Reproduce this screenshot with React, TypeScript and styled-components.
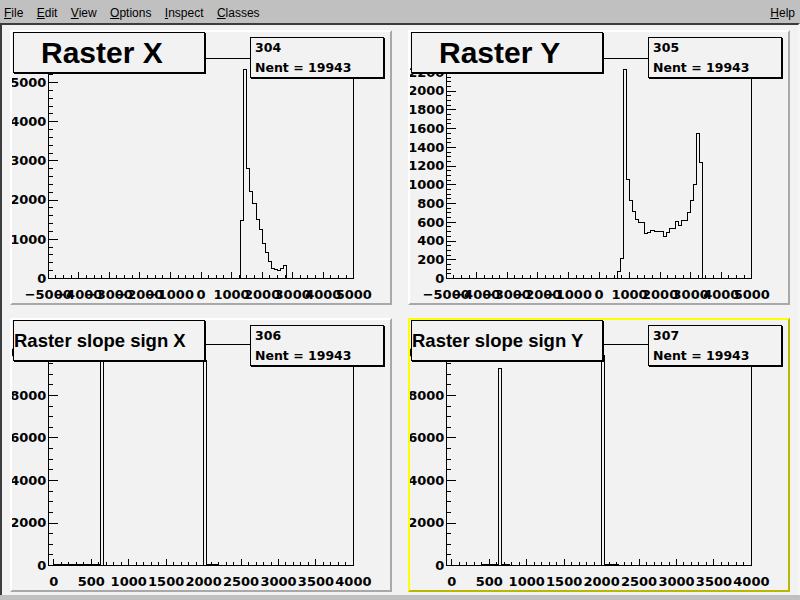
import React from "react";
import styled, { createGlobalStyle } from "styled-components";

const GlobalStyle = createGlobalStyle`
  html, body { margin: 0; padding: 0; }
  body { background: #c0c0c0; font-family: "Liberation Sans", Arial, sans-serif; }
  #root { width: 800px; height: 600px; overflow: hidden; }
`;

const Window = styled.div`
  width: 800px;
  height: 600px;
  display: flex;
  flex-direction: column;
  background: #c0c0c0;
`;

const MenuBar = styled.nav`
  box-sizing: border-box;
  height: 23px;
  padding: 3px 5px 0 4px;
  display: flex;
  align-items: center;
  gap: 13.4px;
  font: 12px "Liberation Sans", Arial, sans-serif;
  color: #000;
`;

const MenuItem = styled.span`
  white-space: nowrap;
`;

const Mnemonic = styled.span`
  text-decoration: underline;
  text-underline-offset: 1px;
`;

const MenuSpacer = styled.div`
  flex: 1;
`;

const Canvas = styled.main`
  display: grid;
  grid-template-columns: 382px 382px;
  grid-template-rows: 275px 274px;
  column-gap: 16px;
  row-gap: 13px;
  padding: 5px 8px 3px 8px;
  border-top: 2px solid #3c3c3c;
  border-left: 2px solid #3c3c3c;
  border-right: 2px solid #f6f6f6;
  background: #f2f2f2;
`;

const Pad = styled.section<{ $selected?: boolean }>`
  position: relative;
  box-sizing: border-box;
  overflow: hidden;
  background: #f2f2f2;
  border: 2px solid;
  border-color: ${(p) =>
    p.$selected
      ? "#ffff00 #b8b800 #b8b800 #ffff00"
      : "#ffffff #a8a8a8 #a8a8a8 #ffffff"};
`;

const PlotSvg = styled.svg`
  display: block;
  margin: -2px 0 0 -2px;
  font-family: "DejaVu Sans", "Liberation Sans", sans-serif;
  font-weight: bold;
  font-size: 13px;
`;

const TitleBox = styled.div<{ $size: number; $indent: number }>`
  position: absolute;
  left: 1px;
  top: 0;
  box-sizing: border-box;
  width: 192px;
  height: 41px;
  border: 1px solid #000;
  box-shadow: 1px 1px 0 #000;
  background: #f2f2f2;
  display: flex;
  align-items: center;
  padding-left: ${(p) => p.$indent}px;
  font-family: "Liberation Sans", Arial, sans-serif;
  font-weight: bold;
  font-size: ${(p) => p.$size}px;
  white-space: nowrap;
  color: #000;
`;

const StatsBox = styled.div`
  position: absolute;
  left: 238px;
  top: 5px;
  box-sizing: border-box;
  width: 134px;
  height: 41px;
  border: 1px solid #000;
  box-shadow: 1px 1px 0 #000;
  background: #f2f2f2;
  padding-left: 4px;
  font-family: "DejaVu Sans", "Liberation Sans", sans-serif;
  font-weight: bold;
  font-size: 12.5px;
  color: #000;
`;

const StatLine = styled.div`
  height: 20px;
  line-height: 20px;
  white-space: nowrap;
`;

type Bin = { lo: number; hi: number; v: number };

interface PadSpec {
  title: string;
  titleSize: number;
  titleIndent: number;
  id: string;
  selected?: boolean;
  frameTop: number;
  frameBottom: number;
  x0: number;
  xScale: number;
  xMin: number;
  xMax: number;
  xMajor: number;
  xMinorDiv: number;
  yScale: number;
  yMajor: number;
  yMinorDiv: number;
  bins: Bin[];
}

const FRAME_L = 38;
const FRAME_R = 343;

const seq = (start: number, step: number, vals: number[]): Bin[] =>
  vals.map((v, i) => ({ lo: start + i * step, hi: start + (i + 1) * step, v }));

const pads: PadSpec[] = [
  {
    title: "Raster X",
    titleSize: 30,
    titleIndent: 27,
    id: "304",
    frameTop: 28,
    frameBottom: 248,
    x0: 191,
    xScale: 0.03056,
    xMin: -5000,
    xMax: 5000,
    xMajor: 1000,
    xMinorDiv: 4,
    yScale: 0.0392,
    yMajor: 1000,
    yMinorDiv: 5,
    bins: seq(1300, 100, [
      1480, 5332, 2798, 2219, 1906, 1505, 1242, 885, 656, 426, 255, 222, 196, 263, 332,
    ]),
  },
  {
    title: "Raster Y",
    titleSize: 30,
    titleIndent: 27,
    id: "305",
    frameTop: 28,
    frameBottom: 248,
    x0: 191,
    xScale: 0.03056,
    xMin: -5000,
    xMax: 5000,
    xMajor: 1000,
    xMinorDiv: 4,
    yScale: 0.09365,
    yMajor: 200,
    yMinorDiv: 4,
    bins: seq(600, 100, [
      78, 217, 2228, 1057, 833, 715, 627, 594, 594, 477, 494, 512, 502, 502, 502, 448, 488,
      531, 531, 609, 566, 619, 619, 701, 833, 1004, 1545, 1242,
    ]),
  },
  {
    title: "Raster slope sign X",
    titleSize: 18.5,
    titleIndent: 0,
    id: "306",
    frameTop: 26,
    frameBottom: 247,
    x0: 43.8,
    xScale: 0.0749,
    xMin: -75,
    xMax: 4005,
    xMajor: 500,
    xMinorDiv: 5,
    yScale: 0.02125,
    yMajor: 2000,
    yMinorDiv: 4,
    bins: [
      { lo: 0, hi: 623, v: 47 },
      { lo: 623, hi: 663, v: 9860 },
      { lo: 2005, hi: 2045, v: 9670 },
      { lo: 2045, hi: 2190, v: 47 },
    ],
  },
  {
    title: "Raster slope sign Y",
    titleSize: 18.5,
    titleIndent: 0,
    id: "307",
    selected: true,
    frameTop: 26,
    frameBottom: 247,
    x0: 43.8,
    xScale: 0.0749,
    xMin: -75,
    xMax: 4005,
    xMajor: 500,
    xMinorDiv: 5,
    yScale: 0.02125,
    yMajor: 2000,
    yMinorDiv: 4,
    bins: [
      { lo: 400, hi: 621, v: 47 },
      { lo: 621, hi: 661, v: 9280 },
      { lo: 661, hi: 777, v: 47 },
      { lo: 2005, hi: 2045, v: 9860 },
      { lo: 2045, hi: 2219, v: 47 },
    ],
  },
];

const fmt = (v: number) => (v < 0 ? "\u2212" + String(-v) : String(v));

function HistPad({ spec }: { spec: PadSpec }) {
  const X = (v: number) => spec.x0 + v * spec.xScale;
  const Y = (v: number) => spec.frameBottom - v * spec.yScale;
  const px = (n: number) => Math.floor(n) + 0.5;
  const fb = spec.frameBottom + 0.5;
  const fl = FRAME_L + 0.5;

  const ticks: React.ReactNode[] = [];
  const labels: React.ReactNode[] = [];

  // Y axis
  const yStep = spec.yMajor / spec.yMinorDiv;
  for (let i = 0; ; i++) {
    const v = i * yStep;
    const y = Y(v);
    if (y < spec.frameTop) break;
    const major = i % spec.yMinorDiv === 0;
    const yy = Math.round(y) + 0.5;
    ticks.push(
      <line key={"yt" + i} x1={fl} y1={yy} x2={fl + (major ? 9 : 4.5)} y2={yy} />
    );
    if (major) {
      labels.push(
        <text key={"yl" + i} x={36.4} y={y + 4.75} textAnchor="end">
          {fmt(v)}
        </text>
      );
    }
  }

  // X axis
  const xStep = spec.xMajor / spec.xMinorDiv;
  const first = Math.ceil(spec.xMin / xStep - 1e-9);
  for (let k = first; k * xStep <= spec.xMax + 1e-9; k++) {
    const v = k * xStep;
    const x = X(v);
    const major = ((k % spec.xMinorDiv) + spec.xMinorDiv) % spec.xMinorDiv === 0;
    const xx = px(x);
    ticks.push(
      <line key={"xt" + k} x1={xx} y1={fb} x2={xx} y2={fb - (major ? 7 : 3.5)} />
    );
    if (major) {
      labels.push(
        <text key={"xl" + k} x={x} y={spec.frameBottom + 20.5} textAnchor="middle">
          {fmt(v)}
        </text>
      );
    }
  }

  // Histogram path
  const bins = spec.bins;
  let d = `M ${px(X(bins[0].lo))} ${fb}`;
  let prevHi: number | null = null;
  for (const b of bins) {
    if (prevHi !== null && Math.abs(b.lo - prevHi) > 1e-6) {
      d += ` L ${px(X(prevHi))} ${fb} L ${px(X(b.lo))} ${fb}`;
    }
    const yy = Math.round(Y(b.v)) + 0.5;
    d += ` L ${px(X(b.lo))} ${yy} L ${px(X(b.hi))} ${yy}`;
    prevHi = b.hi;
  }
  d += ` L ${px(X(prevHi as number))} ${fb}`;

  return (
    <Pad $selected={spec.selected}>
      <PlotSvg width={382} height={275} viewBox="0 0 382 275">
        <g stroke="#000" strokeWidth={1} fill="none" shapeRendering="crispEdges">
          <rect
            x={fl}
            y={spec.frameTop + 0.5}
            width={FRAME_R - FRAME_L}
            height={spec.frameBottom - spec.frameTop}
          />
          {ticks}
          <path d={d} />
        </g>
        <g fill="#000">{labels}</g>
      </PlotSvg>
      <TitleBox $size={spec.titleSize} $indent={spec.titleIndent}>
        {spec.title}
      </TitleBox>
      <StatsBox>
        <StatLine>{spec.id}</StatLine>
        <StatLine>Nent = 19943</StatLine>
      </StatsBox>
    </Pad>
  );
}

const menu = ["File", "Edit", "View", "Options", "Inspect", "Classes"];

export default function App() {
  return (
    <>
      <GlobalStyle />
      <Window>
        <MenuBar>
          {menu.map((m) => (
            <MenuItem key={m}>
              <Mnemonic>{m[0]}</Mnemonic>
              {m.slice(1)}
            </MenuItem>
          ))}
          <MenuSpacer />
          <MenuItem>
            <Mnemonic>H</Mnemonic>elp
          </MenuItem>
        </MenuBar>
        <Canvas>
          {pads.map((p) => (
            <HistPad key={p.id} spec={p} />
          ))}
        </Canvas>
      </Window>
    </>
  );
}
